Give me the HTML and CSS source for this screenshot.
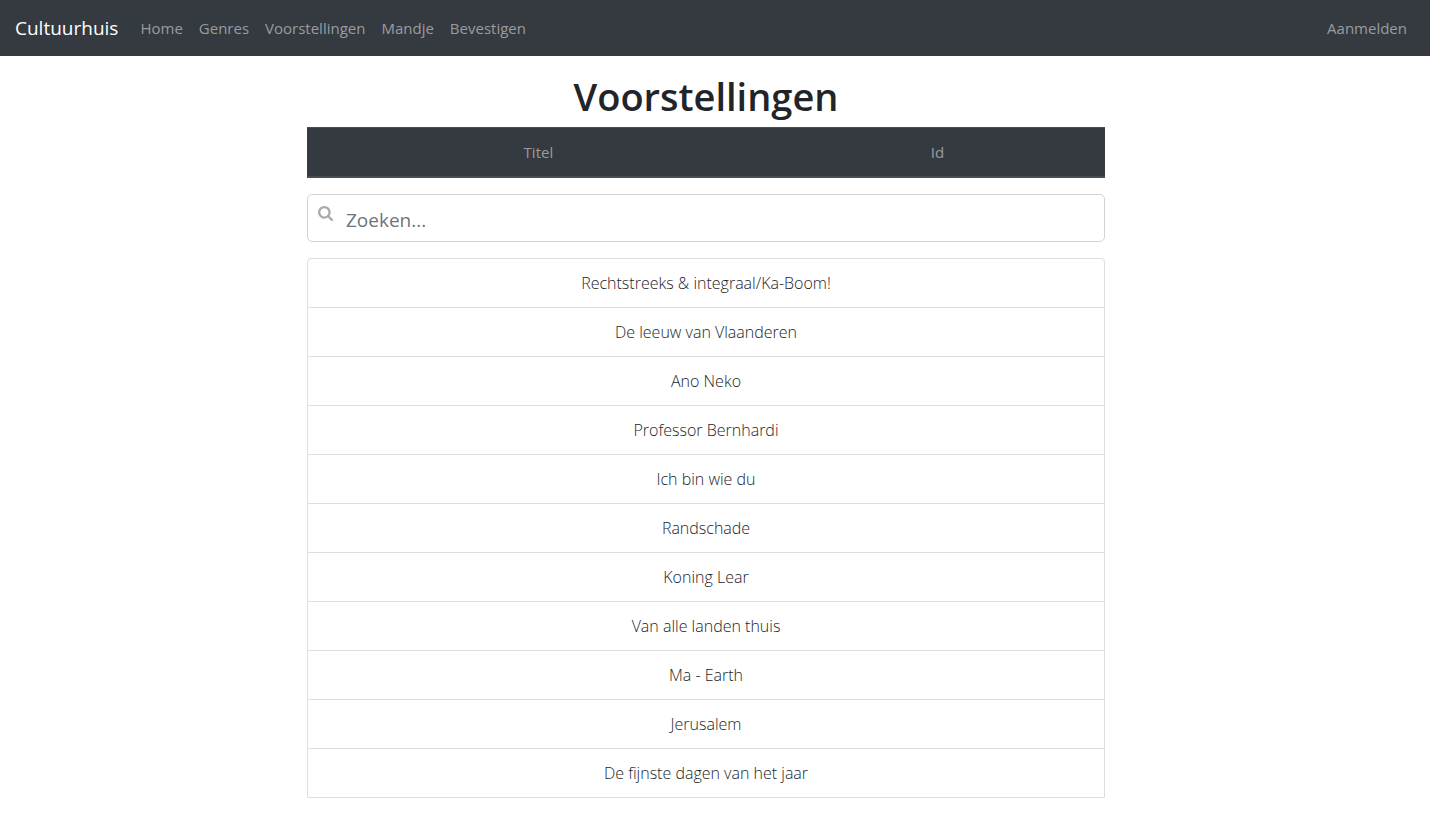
FILE: index.html
```html
<!DOCTYPE html>
<html lang="nl">
<head>
<meta charset="utf-8">
<meta name="viewport" content="width=device-width, initial-scale=1">
<title>Cultuurhuis - Voorstellingen</title>
<link rel="stylesheet" href="styles.css">
</head>
<body>
<nav class="navbar">
  <a class="brand" href="#">Cultuurhuis</a>
  <ul class="nav-list">
    <li><a class="nav-link" href="#">Home</a></li>
    <li><a class="nav-link" href="#">Genres</a></li>
    <li><a class="nav-link" href="#">Voorstellingen</a></li>
    <li><a class="nav-link" href="#">Mandje</a></li>
    <li><a class="nav-link" href="#">Bevestigen</a></li>
  </ul>
  <a class="nav-link nav-login" href="#">Aanmelden</a>
</nav>
<main class="page">
  <div class="content">
    <h1 class="title">Voorstellingen</h1>
    <table class="table">
      <thead>
        <tr><th class="col-title" scope="col">Titel</th><th class="col-id" scope="col">Id</th></tr>
      </thead>
    </table>
    <div class="search">
      <svg class="search-icon" viewBox="0 0 1664 1664" aria-hidden="true"><path d="M1152 704q0-185-131.500-316.500T704 256 387.500 387.500 256 704t131.500 316.500T704 1152t316.500-131.500T1152 704zm512 832q0 52-38 90t-90 38q-54 0-90-38l-343-342q-179 124-399 124-143 0-273.500-55.500t-225-150-150-225T0 704t55.500-273.500 150-225 225-150T704 0t273.500 55.500 225 150 150 225T1408 704q0 220-124 399l343 343q37 37 37 90z"/></svg>
      <input class="search-input" type="text" placeholder="Zoeken..." aria-label="Zoeken">
    </div>
    <ul class="list">
      <li class="item">Rechtstreeks &amp; integraal/Ka-Boom!</li>
      <li class="item">De leeuw van Vlaanderen</li>
      <li class="item">Ano Neko</li>
      <li class="item">Professor Bernhardi</li>
      <li class="item">Ich bin wie du</li>
      <li class="item">Randschade</li>
      <li class="item">Koning Lear</li>
      <li class="item">Van alle landen thuis</li>
      <li class="item">Ma - Earth</li>
      <li class="item">Jerusalem</li>
      <li class="item">De fijnste dagen van het jaar</li>
    </ul>
  </div>
</main>
</body>
</html>
```
FILE: styles.css
```css
*, *::before, *::after { box-sizing: border-box; }

body {
  margin: 0;
  background: #fff;
  color: #212529;
  font-family: "Segoe UI", "Open Sans", "Noto Sans", sans-serif;
  font-size: 15px;
  line-height: 24px;
}

.navbar {
  display: flex;
  align-items: center;
  padding: 8px 15px;
  background: #343a40;
}

.brand {
  margin-right: 14px;
  color: #fff;
  font-size: 19px;
  line-height: 30px;
  text-decoration: none;
}

.nav-list {
  display: flex;
  margin: 0;
  padding: 0;
  list-style: none;
}

.nav-link {
  display: block;
  padding: 8px;
  color: #999c9f;
  text-decoration: none;
}

.nav-login { margin-left: auto; }

.page { padding: 16px 18px 29px 0; }

.content {
  max-width: 798px;
  margin: 0 auto;
}

.title {
  margin: 0 0 7px;
  font-size: 38px;
  font-weight: 600;
  line-height: 48px;
  text-align: center;
}

.table {
  width: 100%;
  margin-bottom: 16px;
  border-spacing: 0;
  background: #343a40;
  color: #999c9f;
  text-align: center;
}

.table th {
  padding: 12px;
  border-top: 1px solid #454d55;
  border-bottom: 2px solid #454d55;
  font-weight: 400;
}

.col-title { width: 58%; }
.col-id { width: 42%; }

.search {
  position: relative;
  margin-bottom: 16px;
}

.search-icon {
  position: absolute;
  top: 12px;
  left: 11px;
  width: 15px;
  height: 15px;
  fill: #aaa;
}

.search-input {
  display: block;
  width: 100%;
  height: 48px;
  padding: 10px 16px 6px 38px;
  border: 1px solid #ced4da;
  border-radius: 5px;
  background: #fff;
  color: #495057;
  font: inherit;
  font-size: 19px;
  line-height: 30px;
}

.search-input::placeholder { color: #6c757d; opacity: 1; }

.list {
  margin: 0;
  padding: 0;
  border: 1px solid #dfdfdf;
  border-radius: 4px 4px 0 0;
  list-style: none;
}

.item {
  padding: 12px 20px;
  font-size: 16px;
  font-weight: 300;
  text-align: center;
}

.item + .item { border-top: 1px solid #dfdfdf; }
```
